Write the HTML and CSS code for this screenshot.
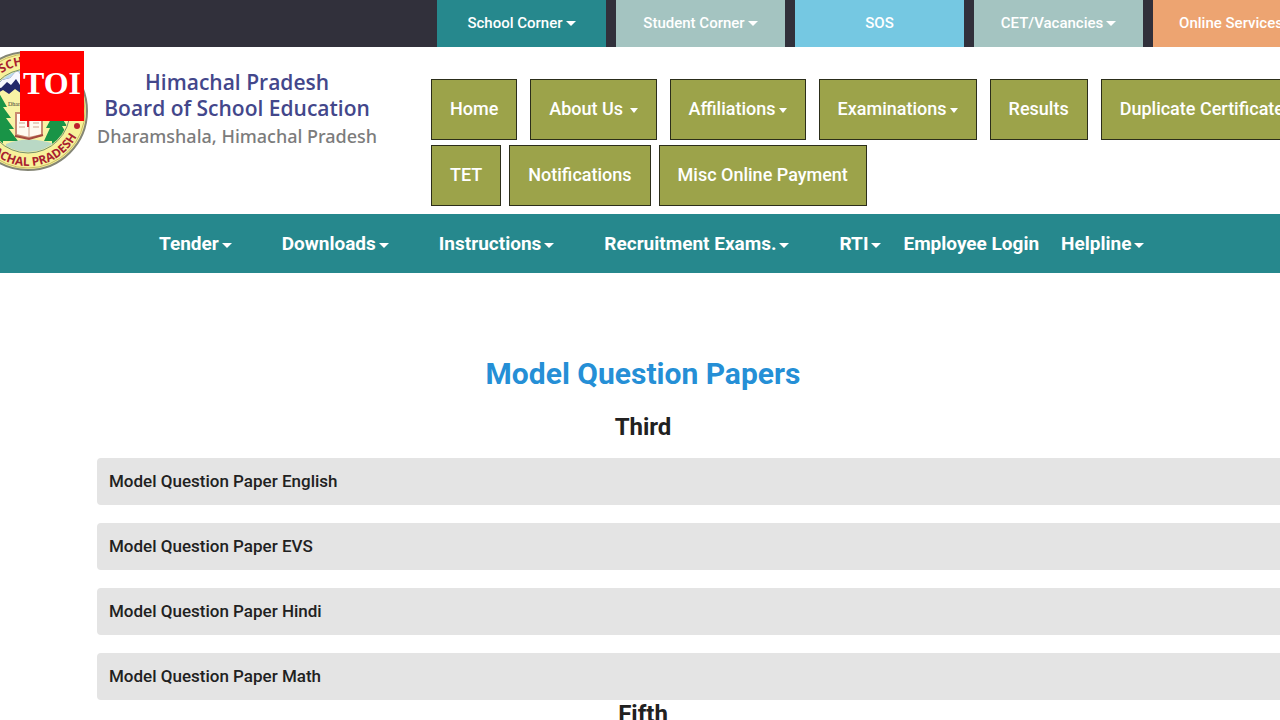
FILE: index.html
```html
<!DOCTYPE html>
<html lang="en">
<head>
<meta charset="utf-8">
<title>Himachal Pradesh Board of School Education</title>
<link rel="stylesheet" href="styles.css">
</head>
<body>
<nav class="topbar" aria-label="Quick links">
  <button class="tab tab-teal">School Corner<span class="caret"></span></button>
  <button class="tab tab-sage">Student Corner<span class="caret"></span></button>
  <a class="tab tab-sky" href="#">SOS</a>
  <button class="tab tab-sage">CET/Vacancies<span class="caret"></span></button>
  <button class="tab tab-orange">Online Services<span class="caret"></span></button>
</nav>

<header class="header">
  <div class="brand">
    <svg class="emblem" viewBox="0 0 120 120" aria-hidden="true">
      <defs>
        <clipPath id="disc"><circle cx="60" cy="60" r="41"/></clipPath>
        <path id="arc-top" d="M14 60A46 46 0 0 1 106 60"/>
        <path id="arc-bottom" d="M5 60A55 55 0 0 0 115 60"/>
      </defs>
      <circle cx="60" cy="60" r="59" fill="#f8f19a" stroke="#858675" stroke-width="2"/>
      <circle cx="60" cy="60" r="57" fill="none" stroke="#c9bd65" stroke-width="1"/>
      <g clip-path="url(#disc)">
        <rect width="120" height="120" fill="#f8f3a5"/>
        <path d="M12 18H108V45H12Z" fill="#b9d9ee"/>
        <path d="M12 48L24 39L34 29L42 27L49 19L57 29L68 24L79 36L90 31L108 48Z" fill="#22286a"/>
        <path d="M28 36L34 29L42 27L49 19L57 29L52 34L48 28L43 34L39 31L33 37Z" fill="#f7f8ff"/>
        <path d="M28 43L35 39L41 43L47 38L54 43L60 40L60 49L25 49Z" fill="#f8f3a5"/>
        <path d="M31 42L39 56H35L43 67H38L46 78H41L50 90H35V101H28V91H12V80H19L16 69H22L19 58H26Z" fill="#199447"/>
        <path d="M86 48L94 61H90L99 75H94L103 90H89V100H84V90H76L82 77H78L84 66H80Z" fill="#199447"/>
        <path d="M38 93Q60 84 86 93V103H38Z" fill="#b9d8c5"/>
        <path d="M48 62H60L62 65L64 62H74V84L61 87L48 84Z" fill="#fffaf0" stroke="#c98970" stroke-width="2"/>
        <path d="M61 65V86M51 72H57M51 76H57M65 72H71M65 76H71" stroke="#d0a28d"/>
        <path d="M60 59V76" stroke="#d72b31" stroke-width="2"/>
        <path d="M47 85L61 88L75 84" fill="none" stroke="#a44a3e" stroke-width="2"/>
      </g>
      <circle cx="60" cy="60" r="42" fill="none" stroke="#76906d"/>
      <circle cx="109" cy="75" r="3" fill="#bd1e2c"/>
      <text class="seal-text"><textPath href="#arc-top" startOffset="44">SCHOOL EDUCATION</textPath></text>
      <text class="seal-text"><textPath href="#arc-bottom" startOffset="23">HIMACHAL PRADESH</textPath></text>
      <text class="seal-motto" x="40" y="55">Dharamshala</text>
    </svg>
    <div class="brand-text">
      <p class="brand-name">Himachal Pradesh<br>Board of School Education</p>
      <p class="brand-place">Dharamshala, Himachal Pradesh</p>
    </div>
  </div>
  <nav class="menu" aria-label="Main">
    <div class="menu-row">
      <a class="menu-item" href="#">Home</a>
      <button class="menu-item">About Us <span class="caret caret-spaced"></span></button>
      <button class="menu-item">Affiliations<span class="caret"></span></button>
      <button class="menu-item">Examinations<span class="caret"></span></button>
      <a class="menu-item" href="#">Results</a>
      <a class="menu-item" href="#">Duplicate Certificate</a>
    </div>
    <div class="menu-row menu-row-tight">
      <a class="menu-item" href="#">TET</a>
      <a class="menu-item" href="#">Notifications</a>
      <a class="menu-item" href="#">Misc Online Payment</a>
    </div>
  </nav>
  <div class="badge">TOI</div>
</header>

<nav class="subnav" aria-label="Services">
  <div class="subnav-group">
    <button class="subnav-item">Tender<span class="caret"></span></button>
    <button class="subnav-item">Downloads<span class="caret"></span></button>
    <button class="subnav-item">Instructions<span class="caret"></span></button>
    <button class="subnav-item">Recruitment Exams.<span class="caret"></span></button>
    <button class="subnav-item">RTI<span class="caret"></span></button>
  </div>
  <a class="subnav-item" href="#">Employee Login</a>
  <button class="subnav-item">Helpline<span class="caret"></span></button>
</nav>

<main class="content">
  <h1 class="title">Model Question Papers</h1>
  <h2 class="grade">Third</h2>
  <ul class="papers">
    <li><a class="paper" href="#">Model Question Paper English</a></li>
    <li><a class="paper" href="#">Model Question Paper EVS</a></li>
    <li><a class="paper" href="#">Model Question Paper Hindi</a></li>
    <li><a class="paper" href="#">Model Question Paper Math</a></li>
  </ul>
  <h2 class="grade">Fifth</h2>
</main>
</body>
</html>
```
FILE: styles.css
```css
* { box-sizing: border-box; }
html { overflow: hidden; }
body {
  margin: 0;
  height: 100vh;
  overflow: hidden;
  background: #fff;
  color: #212121;
  font-family: Roboto, sans-serif;
}
button { font: inherit; border: 0; background: none; cursor: pointer; }
a { color: inherit; text-decoration: none; }
h1, h2, p, ul { margin: 0; padding: 0; }
ul { list-style: none; }

.caret {
  display: inline-block;
  margin-left: 3px;
  vertical-align: 2px;
  border-top: 5px solid;
  border-left: 5px solid transparent;
  border-right: 5px solid transparent;
}

.topbar {
  display: flex;
  gap: 10px;
  padding-left: 437px;
  overflow: hidden;
  background: #31303b;
}
.tab {
  flex: 0 0 169px;
  padding: 0;
  text-align: center;
  white-space: nowrap;
  color: #fff;
  font-size: 15px;
  font-weight: 500;
  line-height: 47px;
}
.tab-teal { background: #26888d; }
.tab-sage { background: #a4c4c1; }
.tab-sky { background: #75c8e2; }
.tab-orange { background: #eda471; }

.header {
  position: relative;
  display: flex;
  align-items: flex-start;
  overflow: hidden;
  padding-bottom: 8px;
}
.brand {
  display: flex;
  flex: 0 0 431px;
  align-items: flex-start;
  gap: 9px;
  padding-top: 4px;
}
.emblem { flex: none; width: 120px; height: 120px; margin-left: -32px; }
.seal-text { font: 700 12px "Open Sans", sans-serif; fill: #a8202e; }
.seal-motto { font: 6px "Liberation Serif", serif; fill: #443d36; }
.brand-text {
  padding-top: 18px;
  text-align: center;
  white-space: nowrap;
}
.brand-name {
  color: #43478b;
  font: 600 21px/26px "Open Sans", sans-serif;
}
.brand-place {
  color: #7c7c7c;
  font: 500 18px/30px "Noto Sans", sans-serif;
}
.badge {
  position: absolute;
  top: 4px;
  left: 20px;
  width: 64px;
  height: 70px;
  background: #f00;
  color: #fff;
  font: 700 32px/64px "Liberation Serif", serif;
  text-align: center;
}

.menu { display: grid; gap: 5px; padding-top: 32px; }
.menu-row { display: flex; gap: 13px; }
.menu-row-tight { gap: 8px; }
.menu-item {
  flex: none;
  padding: 0 18px 2px;
  border: 1px solid #2c2e1a;
  background: #9ca34a;
  color: #fff;
  font-size: 18px;
  font-weight: 500;
  line-height: 57px;
  white-space: nowrap;
}
.menu-item .caret { border-left-width: 4px; border-right-width: 4px; }
.menu-item .caret-spaced { margin-left: 2px; }

.subnav {
  display: flex;
  gap: 22px;
  padding-left: 159px;
  background: #26888d;
}
.subnav-group { display: flex; gap: 50px; }
.subnav-item {
  padding: 0;
  color: #fff;
  font-size: 19px;
  font-weight: 700;
  line-height: 59px;
  white-space: nowrap;
}

.content { padding-top: 80px; }
.title, .grade { padding-left: 6px; text-align: center; }
.title { color: #258fd6; font-size: 30px; font-weight: 700; line-height: 42px; }
.grade { font-size: 24px; font-weight: 700; line-height: 28px; }
.title + .grade { padding-top: 18px; padding-bottom: 17px; }
.papers { display: grid; gap: 18px; padding-left: 97px; }
.paper {
  display: block;
  padding: 0 12px;
  border-radius: 4px 0 0 4px;
  background: #e4e4e4;
  font-size: 17px;
  font-weight: 500;
  line-height: 47px;
}
```
